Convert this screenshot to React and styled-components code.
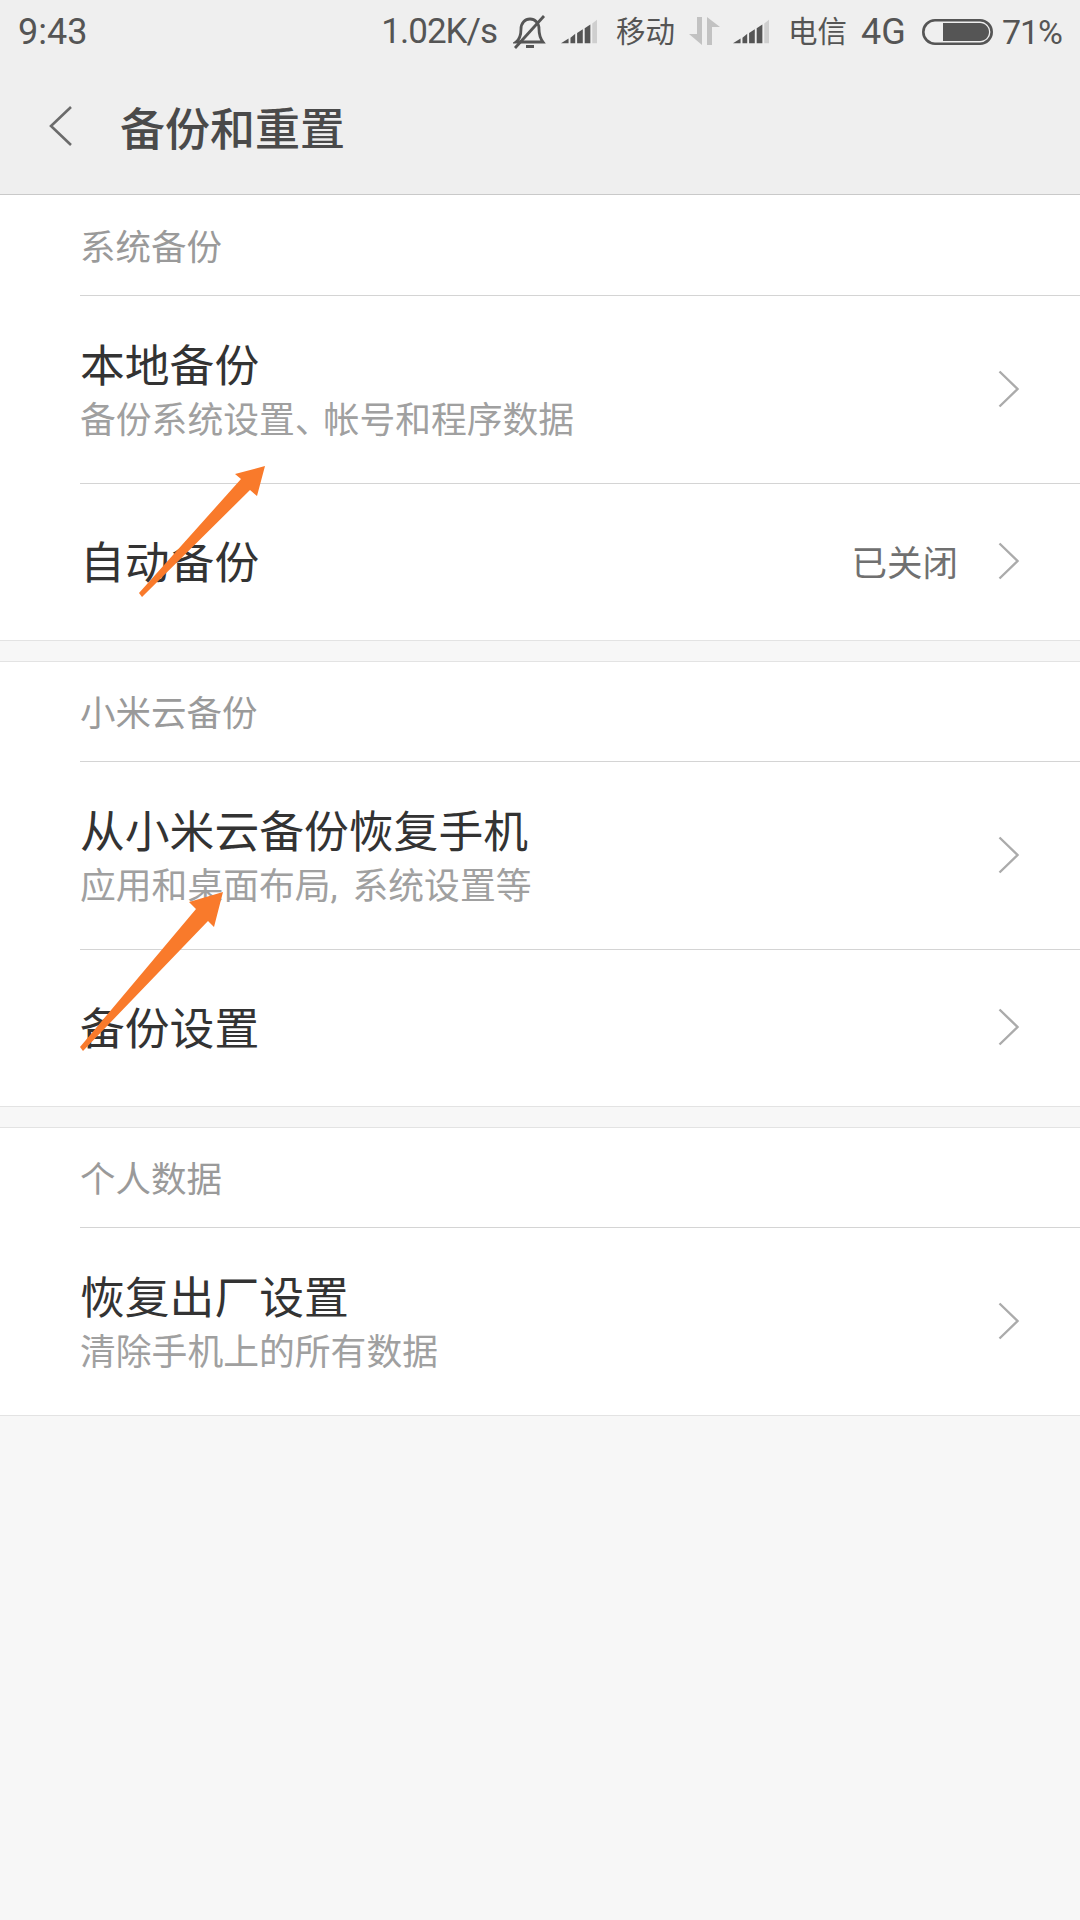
import React from "react";
import styled, { createGlobalStyle } from "styled-components";

const GlobalStyle = createGlobalStyle`
  html, body {
    margin: 0;
    padding: 0;
    background: #f7f7f7;
    font-family: Roboto, "Noto Sans CJK SC", sans-serif;
  }
`;

const Page = styled.div`
  position: relative;
  width: 1080px;
  height: 1920px;
  overflow: hidden;
  background: #f7f7f7;
`;

const TopBar = styled.header`
  height: 194px;
  background: #efefef;
  border-bottom: 1px solid #c9c9c9;
`;

const StatusBar = styled.div`
  box-sizing: border-box;
  height: 60px;
  padding: 3px 18px 0;
  display: flex;
  align-items: center;
  justify-content: space-between;
  color: #555;
`;

const StatusGroup = styled.div`
  display: flex;
  align-items: center;
`;

const StatusText = styled.span`
  margin-left: ${({ $gap }) => $gap || 0}px;
  font-size: ${({ $size }) => $size || 35}px;
  letter-spacing: ${({ $spacing }) => $spacing || 0}px;
  line-height: 40px;
`;

const StatusIcon = styled.svg`
  display: block;
  margin-left: ${({ $gap }) => $gap || 0}px;
  flex: none;
`;

const NavBar = styled.div`
  box-sizing: border-box;
  height: 134px;
  padding: 0 0 2px 49px;
  display: flex;
  align-items: center;
`;

const Title = styled.h1`
  margin: 0 0 0 47px;
  color: #4a4a4a;
  font-size: 45px;
  font-weight: 500;
`;

const Section = styled.section`
  margin-bottom: 20px;
  background: #fff;
  border-top: ${({ $first }) => ($first ? "0" : "1px solid #e3e3e3")};
  border-bottom: 1px solid #e3e3e3;
`;

const SectionLabel = styled.div`
  box-sizing: border-box;
  height: ${({ $first }) => ($first ? 100 : 99)}px;
  padding: 0 0 2px 80px;
  display: flex;
  align-items: center;
  color: #9a9a9a;
  font-size: 35.5px;
`;

const Row = styled.div`
  height: ${({ $tall }) => ($tall ? 187 : 156)}px;
  margin-left: 80px;
  padding-right: 60px;
  display: flex;
  align-items: center;
  border-top: 1px solid #d4d4d4;
`;

const RowText = styled.div`
  flex: 1;
  display: flex;
  flex-direction: column;
  padding-top: 3px;
`;

const RowTitle = styled.div`
  color: #333;
  font-size: 44.8px;
  line-height: 60px;
`;

const RowSub = styled.div`
  margin-top: -1px;
  color: #a0a0a0;
  font-size: 35.8px;
  line-height: 50px;
  word-spacing: 6px;
`;

// the enumeration comma is set narrower than a full cell in the reference
const TightComma = styled.span`
  letter-spacing: -7px;
`;

const RowValue = styled.span`
  margin: 0 40px 3px 0;
  color: #707070;
  font-size: 35.5px;
`;

const RowChevron = styled.svg`
  display: block;
  margin-bottom: 2px;
  flex: none;
`;

const Arrow = styled.svg`
  position: absolute;
  left: 0;
  top: 0;
  pointer-events: none;
`;

function Chevron() {
  return (
    <RowChevron width="22" height="38" viewBox="0 0 22 38" fill="none">
      <path d="M1.5 1.5L19.5 19L1.5 36.5" stroke="#ababab" strokeWidth="2.4" />
    </RowChevron>
  );
}

function Signal({ gap }) {
  return (
    <StatusIcon $gap={gap} width="36" height="27" viewBox="0 0 38 27">
      <path d="M0 26L8 21V26Z" fill="#555" />
      <path d="M10 20L15 16V26H10Z" fill="#555" />
      <path d="M17 15L23 11V26H17Z" fill="#555" />
      <path d="M25 10L31 6V26H25Z" fill="#555" />
      <path d="M33 5L38 1V26H33Z" fill="#cfcfcf" />
    </StatusIcon>
  );
}

function ListRow({ title, sub, value }) {
  return (
    <Row $tall={!!sub}>
      <RowText>
        <RowTitle>{title}</RowTitle>
        {sub && <RowSub>{sub}</RowSub>}
      </RowText>
      {value && <RowValue>{value}</RowValue>}
      <Chevron />
    </Row>
  );
}

export default function App() {
  return (
    <Page>
      <GlobalStyle />
      <TopBar>
        <StatusBar>
          <StatusText $size={36}>9:43</StatusText>
          <StatusGroup>
            <StatusText $spacing={-1}>1.02K/s</StatusText>
            <StatusIcon $gap={16} width="34" height="34" viewBox="0 0 34 34" fill="none" stroke="#555" strokeWidth="2.8">
              <path d="M3 27H30C27 23 26 20 26 14C26 8 22 4 17 4C12 4 8 8 8 14C8 20 7 24 3 27Z" />
              <path d="M13 31.5H21" strokeWidth="3" />
              <path d="M31 1L2 33" />
            </StatusIcon>
            <Signal gap={14} />
            <StatusText $gap={19} $size={29.5}>移动</StatusText>
            <StatusIcon $gap={14} width="32" height="29" viewBox="0 0 32 29" fill="#c2c2c2">
              <path d="M8 0H13V28L0 17H8Z" />
              <path d="M18 0L31 10H23V28H18Z" />
            </StatusIcon>
            <Signal gap={12} />
            <StatusText $gap={19} $size={29.5}>电信</StatusText>
            <StatusText $gap={14} $size={36}>4G</StatusText>
            <StatusIcon $gap={16} width="71" height="26" viewBox="0 0 71 26" fill="none">
              <rect x="1.3" y="1.3" width="68.4" height="23.4" rx="11.7" stroke="#555" strokeWidth="2.6" />
              <path d="M21 4H58C63 4 67 8 67 13C67 18 63 22 58 22H21Z" fill="#555" />
            </StatusIcon>
            <StatusText $gap={9} $size={34} $spacing={-1}>71%</StatusText>
          </StatusGroup>
        </StatusBar>
        <NavBar>
          <svg width="24" height="42" viewBox="0 0 24 42" fill="none">
            <path d="M22 2L2 21L22 40" stroke="#6b6b6b" strokeWidth="2.6" />
          </svg>
          <Title>备份和重置</Title>
        </NavBar>
      </TopBar>

      <Section $first>
        <SectionLabel $first>系统备份</SectionLabel>
        <ListRow
          title="本地备份"
          sub={<>备份系统设置<TightComma>、</TightComma>帐号和程序数据</>}
        />
        <ListRow title="自动备份" value="已关闭" />
      </Section>
      <Section>
        <SectionLabel>小米云备份</SectionLabel>
        <ListRow title="从小米云备份恢复手机" sub="应用和桌面布局, 系统设置等" />
        <ListRow title="备份设置" />
      </Section>
      <Section>
        <SectionLabel>个人数据</SectionLabel>
        <ListRow title="恢复出厂设置" sub="清除手机上的所有数据" />
      </Section>

      <Arrow width="1080" height="1920" viewBox="0 0 1080 1920" fill="#f97a2b">
        <path d="M139 593L241 479L235 474L265 466L257 496L250 490L142 597Z" />
        <path d="M80 1047L196 909L189 902L223 892L214 927L208 921L83 1051Z" />
      </Arrow>
    </Page>
  );
}
